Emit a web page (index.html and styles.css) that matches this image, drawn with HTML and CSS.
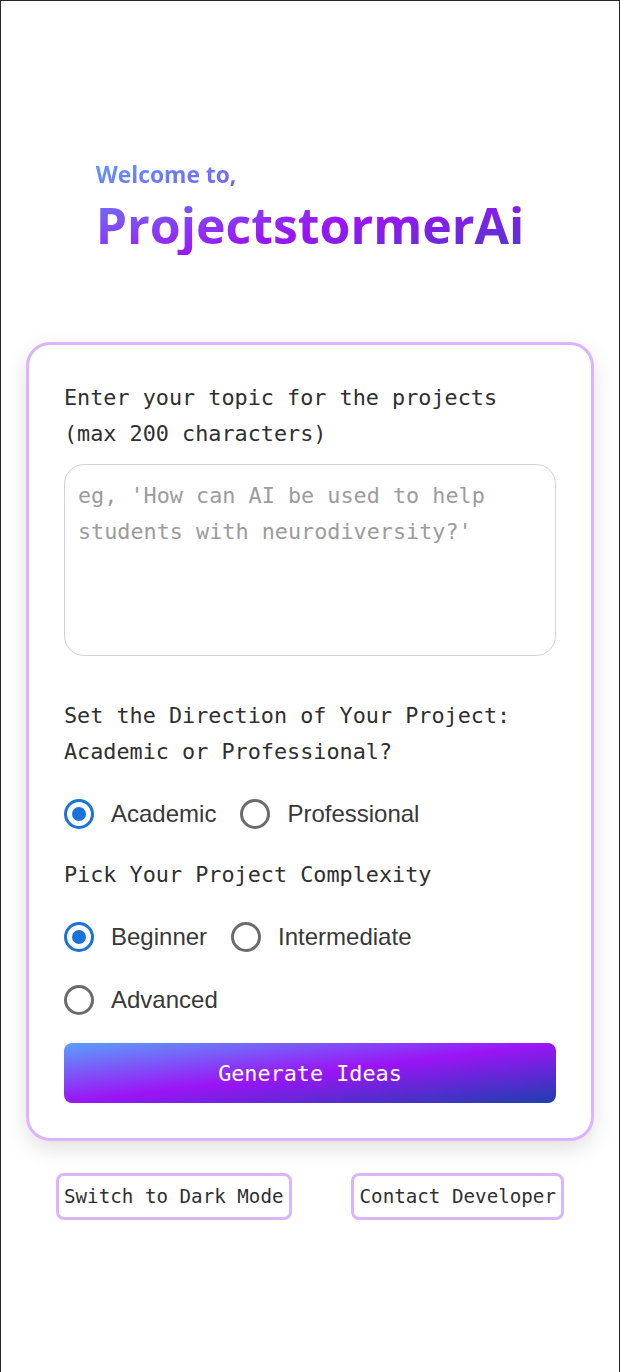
FILE: index.html
```html
<!DOCTYPE html>
<html lang="en">
<head>
<meta charset="utf-8">
<title>ProjectstormerAi</title>
<link rel="stylesheet" href="styles.css">
</head>
<body>
<div class="frame">
  <header class="hero">
    <div class="hero-text">
      <p class="welcome">Welcome to,</p>
      <h1 class="title">ProjectstormerAi</h1>
    </div>
  </header>

  <main class="card">
    <label class="field-label" for="topic">Enter your topic for the projects (max 200 characters)</label>
    <textarea id="topic" class="topic" maxlength="200" placeholder="eg, 'How can AI be used to help students with neurodiversity?'"></textarea>

    <p class="field-label section">Set the Direction of Your Project: Academic or Professional?</p>
    <div class="radios first">
      <label class="radio"><input type="radio" name="dir" checked><span>Academic</span></label>
      <label class="radio"><input type="radio" name="dir"><span>Professional</span></label>
    </div>

    <p class="field-label section2">Pick Your Project Complexity</p>
    <div class="radios second">
      <label class="radio"><input type="radio" name="cx" checked><span>Beginner</span></label>
      <label class="radio"><input type="radio" name="cx"><span>Intermediate</span></label>
      <label class="radio"><input type="radio" name="cx"><span>Advanced</span></label>
    </div>

    <button class="generate" type="button">Generate Ideas</button>
  </main>

  <footer class="footer">
    <button class="ghost" type="button">Switch to Dark Mode</button>
    <button class="ghost" type="button">Contact Developer</button>
  </footer>
</div>
</body>
</html>
```

FILE: styles.css
```css
* { box-sizing: border-box; }

html, body {
  margin: 0;
  padding: 0;
  background: #ffffff;
}

.frame {
  min-height: 1372px;
  border: 1px solid #262626;
  border-bottom: none;
  overflow: hidden;
}

.hero {
  display: flex;
  justify-content: center;
  padding-top: 159px;
}

.hero-text {
  display: inline-block;
  background: linear-gradient(to bottom right, #5aa0fb 0%, #9b14f5 62%, #4a3acb 100%);
  -webkit-background-clip: text;
  background-clip: text;
  color: transparent;
  font-family: "Open Sans", "Noto Sans", sans-serif;
  font-weight: 700;
}

.welcome {
  margin: 0;
  font-size: 22.8px;
  line-height: 30px;
}

.title {
  margin: 5px 0 0;
  font-size: 50px;
  line-height: 60px;
  font-weight: 700;
  letter-spacing: 0;
}

.card {
  margin: 87px 25px 0;
  padding: 35px;
  border: 3px solid #dcb4fc;
  border-radius: 24px;
  background: #ffffff;
  box-shadow: 0 8px 22px rgba(0, 0, 0, 0.12);
}

.field-label {
  display: block;
  margin: 0;
  font-family: "DejaVu Sans Mono", monospace;
  font-size: 21.8px;
  line-height: 36px;
  color: #2f2f2f;
}

.topic {
  display: block;
  width: 100%;
  height: 192px;
  margin-top: 12px;
  padding: 13px 13px;
  border: 1px solid #d3d3da;
  border-radius: 20px;
  resize: none;
  font-family: "DejaVu Sans Mono", monospace;
  font-size: 21.8px;
  line-height: 36px;
  color: #2f2f2f;
  background: #ffffff;
}

.topic::placeholder {
  color: #9c9c9c;
}

.section { margin-top: 42px; }
.section2 { margin-top: 28px; }

.radios {
  display: flex;
  flex-wrap: wrap;
  column-gap: 24px;
  row-gap: 33px;
}

.radios.first { margin-top: 29px; }
.radios.second { margin-top: 29px; }

.radio {
  display: flex;
  align-items: center;
  gap: 17px;
  height: 30px;
  font-family: "Liberation Sans", Arial, sans-serif;
  font-size: 24px;
  color: #383838;
}

.radio input {
  appearance: none;
  -webkit-appearance: none;
  margin: 0;
  width: 30px;
  height: 30px;
  border: 3px solid #6b6b6b;
  border-radius: 50%;
  background: #ffffff;
  display: grid;
  place-items: center;
}

.radio input:checked {
  border-color: #1a73d8;
}

.radio input:checked::after {
  content: "";
  width: 14px;
  height: 14px;
  border-radius: 50%;
  background: #1a73d8;
}

.generate {
  display: block;
  width: 100%;
  height: 60px;
  margin-top: 28px;
  border: none;
  border-radius: 8px;
  background: linear-gradient(to bottom right, #5aa0fb 0%, #9b14f5 50%, #1e3fb0 100%);
  color: #ffffff;
  font-family: "DejaVu Sans Mono", monospace;
  font-size: 21.8px;
}

.footer {
  display: flex;
  justify-content: space-around;
  margin: 32px 25px 0;
}

.ghost {
  height: 47px;
  padding: 0 5.5px;
  border: 3px solid #dcb4fc;
  border-radius: 8px;
  background: #ffffff;
  color: #2f2f2f;
  font-family: "DejaVu Sans Mono", monospace;
  font-size: 19.2px;
}
```
